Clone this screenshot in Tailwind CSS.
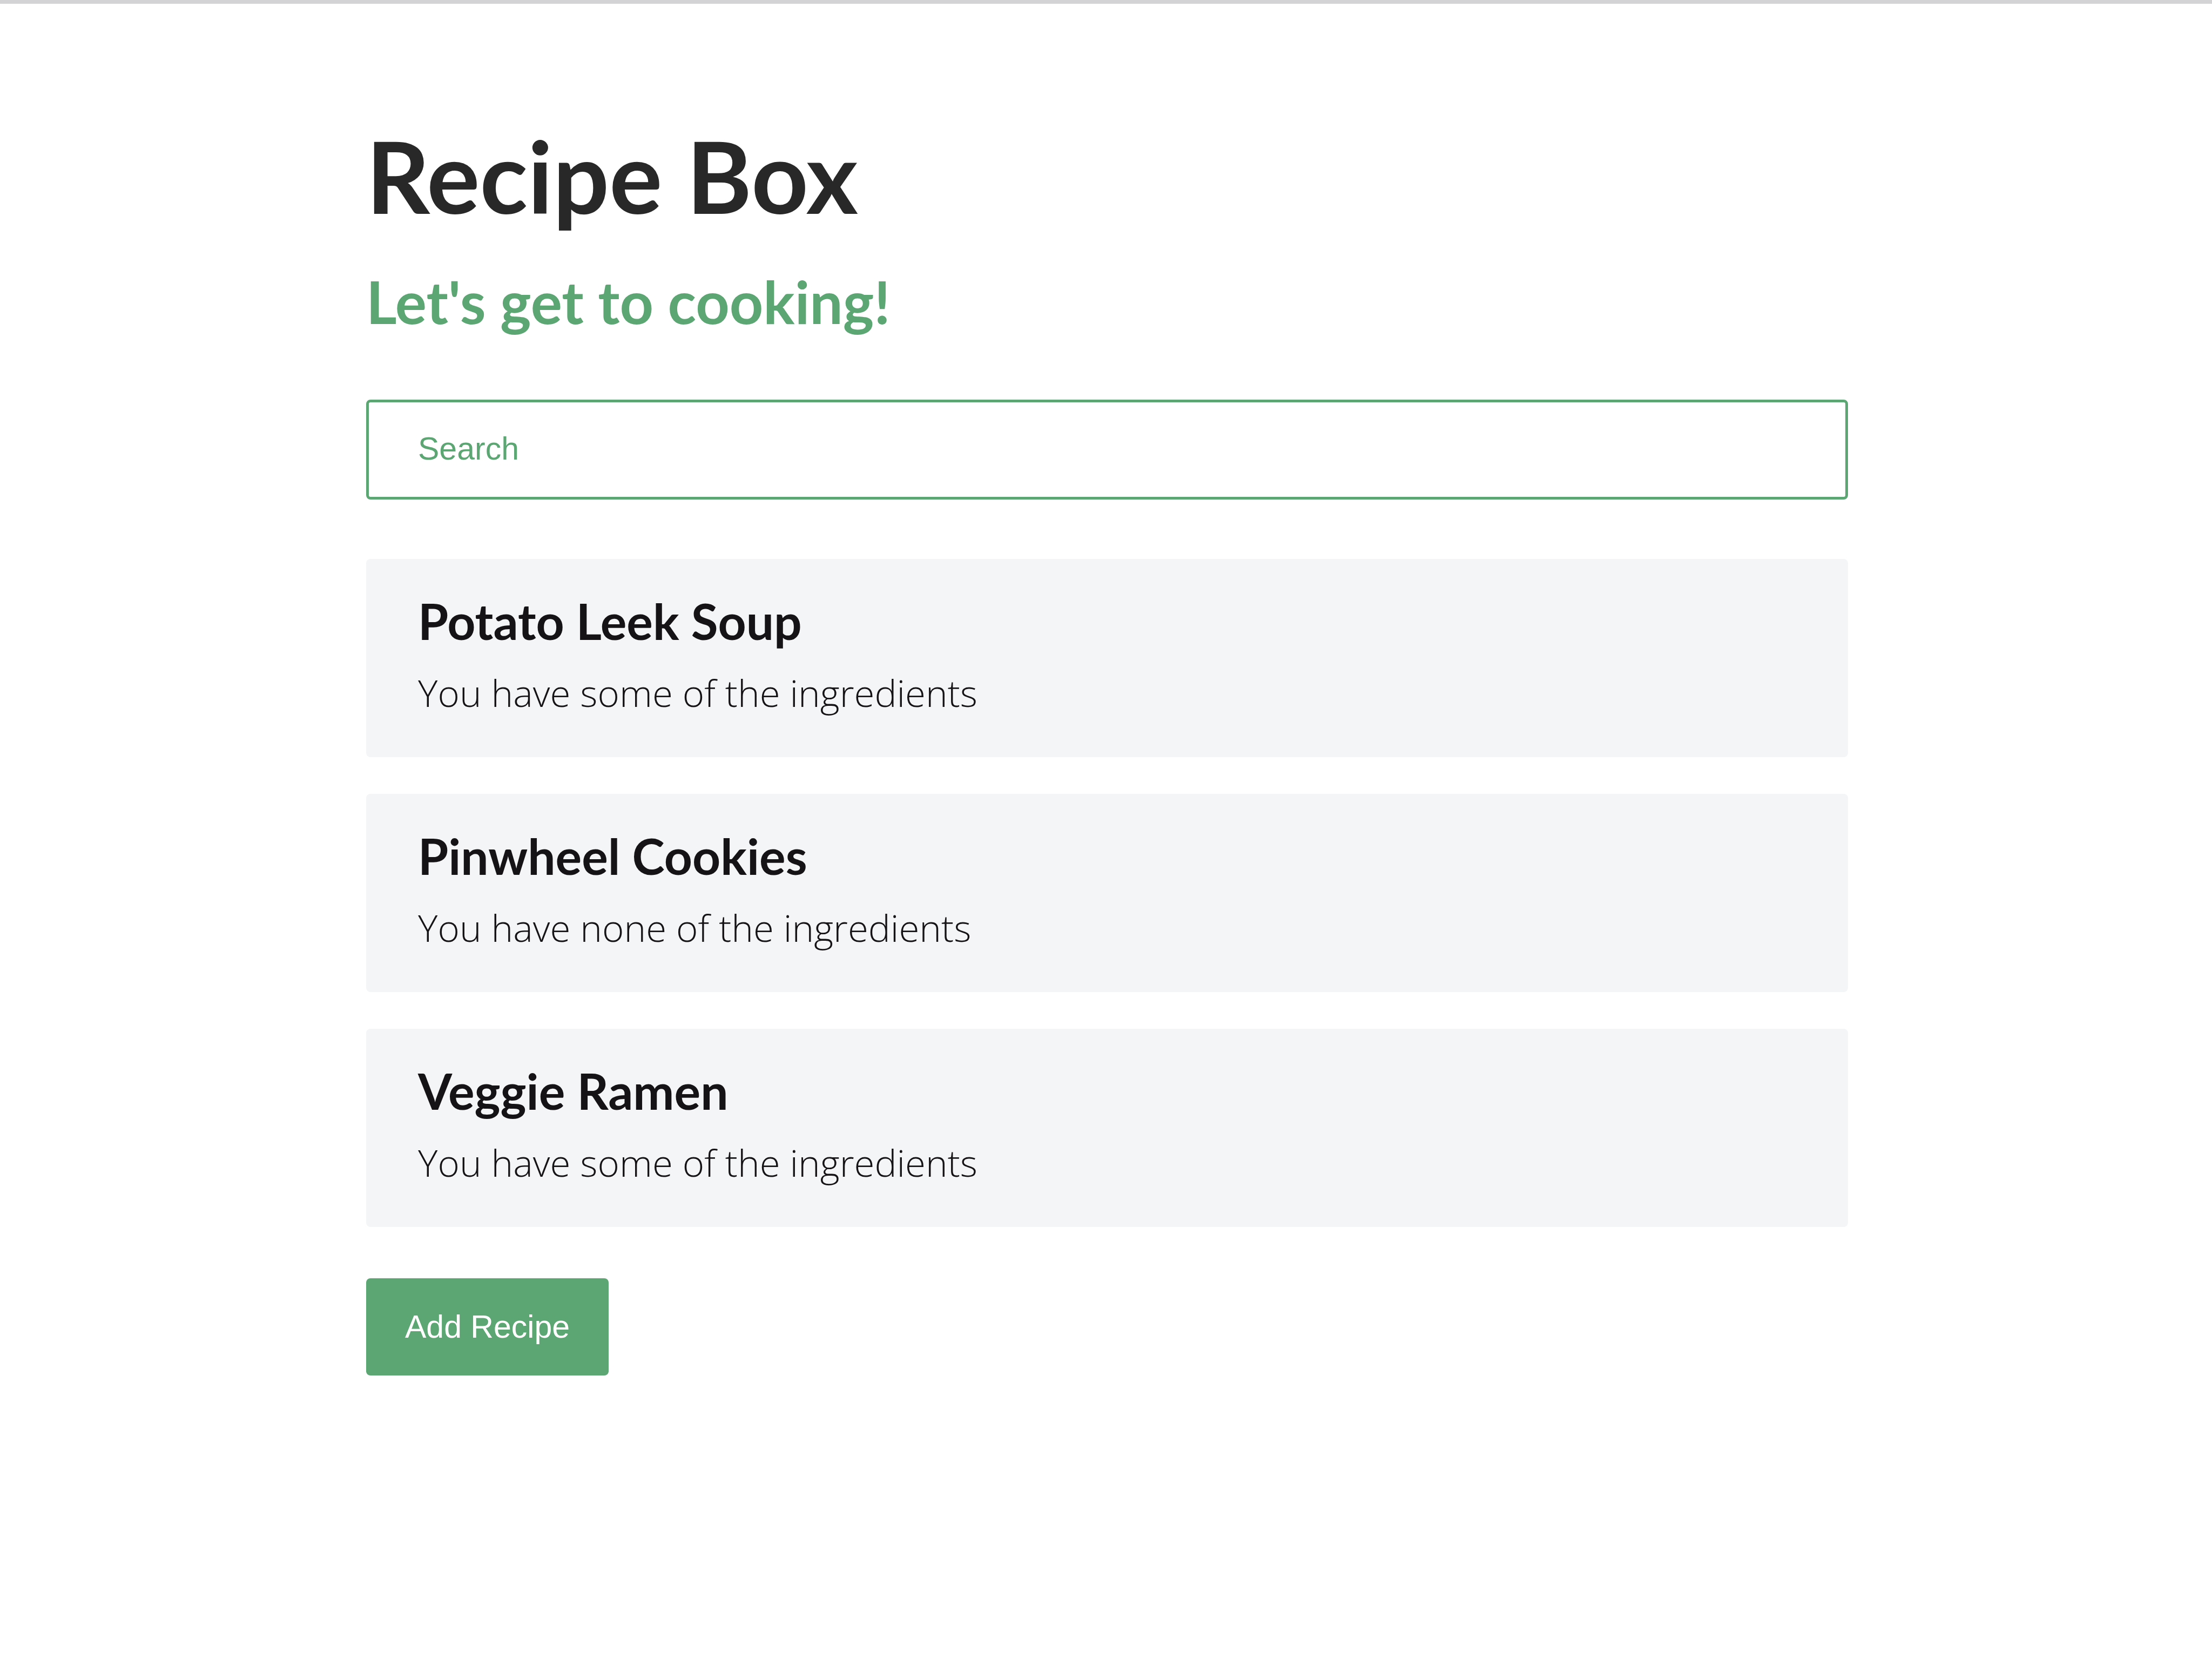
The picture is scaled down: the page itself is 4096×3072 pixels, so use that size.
<!DOCTYPE html>
<html lang="en">
<head>
<meta charset="utf-8">
<meta name="viewport" content="width=device-width, initial-scale=1">
<title>Recipe Box</title>
<script src="https://cdn.jsdelivr.net/npm/@tailwindcss/browser@4"></script>
</head>
<body class="min-h-screen border-t-[7px] border-[#d3d3d5] bg-white font-['Open_Sans',sans-serif] text-[#151316]">
  <main class="pt-[208px] pr-[674px] pb-32 pl-[678px]">
    <header class="font-['Lato',sans-serif] font-bold">
      <h1 class="text-[184px] leading-[220px] text-[#282828]">Recipe Box</h1>
      <h2 class="mt-[57px] text-[109px] leading-[132px] text-[#5ba672]">Let's get to cooking!</h2>
    </header>

    <form class="mt-[116px]">
      <input type="search" aria-label="Search" placeholder="Search" class="block h-[185px] w-full appearance-none rounded-[8px] border-[5px] border-[#5ba672] px-[91px] pb-1 font-['Liberation_Sans',Arial,sans-serif] text-[59px] text-[#5ba672] outline-none placeholder:text-[#5ba672]">
    </form>

    <ul class="mt-[110px] flex flex-col gap-[68px]">
      <li class="rounded-[8px] bg-[#f4f5f7] px-[96px] pt-[60px] pb-[73px]">
        <h3 class="font-['Lato',sans-serif] text-[91px] leading-[110px] font-bold">Potato Leek Soup</h3>
        <p class="mt-[30px] text-[69px] leading-[94px] font-light">You have some of the ingredients</p>
      </li>
      <li class="rounded-[8px] bg-[#f4f5f7] px-[96px] pt-[60px] pb-[73px]">
        <h3 class="font-['Lato',sans-serif] text-[91px] leading-[110px] font-bold">Pinwheel Cookies</h3>
        <p class="mt-[30px] text-[69px] leading-[94px] font-light">You have none of the ingredients</p>
      </li>
      <li class="rounded-[8px] bg-[#f4f5f7] px-[96px] pt-[60px] pb-[73px]">
        <h3 class="font-['Lato',sans-serif] text-[91px] leading-[110px] font-bold">Veggie Ramen</h3>
        <p class="mt-[30px] text-[69px] leading-[94px] font-light">You have some of the ingredients</p>
      </li>
    </ul>

    <button type="button" class="mt-[95px] block h-[180px] rounded-[8px] bg-[#5ba672] px-[72px] font-['Liberation_Sans',Arial,sans-serif] text-[59px] text-white">Add Recipe</button>
  </main>
</body>
</html>
